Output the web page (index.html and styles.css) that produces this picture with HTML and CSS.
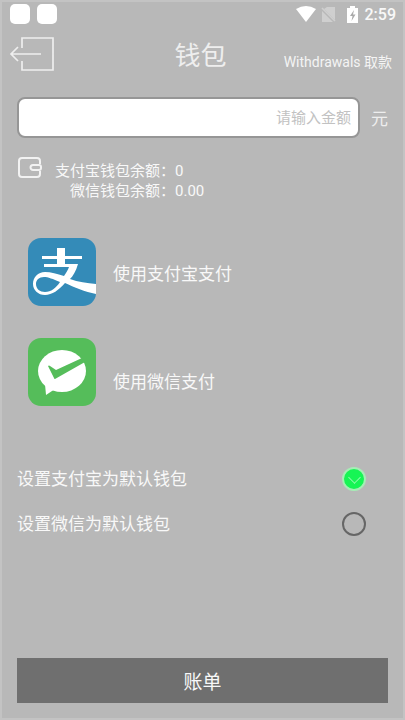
FILE: index.html
```html
<!DOCTYPE html>
<html lang="zh-CN">
<head>
<meta charset="utf-8">
<meta name="viewport" content="width=device-width, initial-scale=1">
<title>钱包</title>
<link rel="stylesheet" href="styles.css">
</head>
<body>
<div class="status">
  <span class="notice"></span>
  <span class="notice"></span>
  <svg class="status-icons" width="62" height="20" viewBox="0 0 62 20" aria-hidden="true">
    <path d="M0 5Q10-1 20 5L10 18Z" fill="#fff"/>
    <path d="M31 3h8v13L28 5zM26 7l11 11H26z" fill="#cfcfcf"/>
    <path d="M26 4l13 13" stroke="#cfcfcf" stroke-width="1.500"/>
    <path d="M54 2h5v2h3v15H51V4h3z" fill="#fff"/>
    <path d="M58 6l-4 6h2.500l-1 5 4-6.500h-2.500z" fill="#aaa"/>
  </svg>
  <span class="clock">2:59</span>
</div>

<header class="header">
  <button class="back" type="button" aria-label="返回">
    <svg width="46" height="36" viewBox="0 0 46 36" fill="none" stroke="#eee" stroke-width="1.700">
      <path d="M13 12V2h31v32H13v-9M32 18H2M9 11l-7 7 7 7"/>
    </svg>
  </button>
  <h1 class="title">钱包</h1>
  <a class="withdraw" href="#withdraw">Withdrawals 取款</a>
</header>

<main class="content">
  <div class="amount">
    <input class="amount-input" id="amount" type="text" inputmode="decimal" placeholder="请输入金额">
    <label class="unit" for="amount">元</label>
  </div>

  <section class="balance">
    <svg width="26" height="22" viewBox="0 0 26 22" fill="none" stroke="#f2f2f2" stroke-width="2" aria-hidden="true">
      <path d="M23 7V4a3 3 0 0 0-3-3H5a3 3 0 0 0-3 3v13a3 3 0 0 0 3 3h15a3 3 0 0 0 3-3v-3"/>
      <path d="M16 8h6a2 2 0 0 1 2 2v1a2 2 0 0 1-2 2h-6a2.500 2.500 0 0 1 0-5z"/>
    </svg>
    <dl class="balances">
      <dt>支付宝钱包余额：</dt><dd>0</dd>
      <dt>微信钱包余额：</dt><dd>0.00</dd>
    </dl>
  </section>

  <section class="methods">
    <button class="method" type="button">
      <svg width="68" height="68" viewBox="0 0 68 68" aria-hidden="true">
        <rect width="68" height="68" rx="13" fill="#348bb8"/>
        <path d="M29 10h8v8h17v3H37v5h13C48 33 45 38 42 41c8 3 17 4 26 5v10c-11-2-22-7-31-11-6 7-13 12-20 12C10 57 5 52 5 46c0-7 5-12 12-12 6 0 12 2 19 4 2-3 4-6 5-9H16v-3h13v-5H14v-3h15zM8 46c0 5 4 8 9 8 6 0 11-4 15-10-7-3-12-5-16-5-5 0-8 3-8 7z" fill="#fff" fill-rule="evenodd"/>
      </svg>
      <span>使用支付宝支付</span>
    </button>
    <button class="method method-wechat" type="button">
      <svg width="68" height="68" viewBox="0 0 68 68" aria-hidden="true">
        <rect width="68" height="68" rx="13" fill="#55bd5a"/>
        <ellipse cx="34" cy="33" rx="24" ry="21" fill="#fff"/>
        <path d="M17 46l1 11 9-6z" fill="#fff"/>
        <path d="M20 28q1-1 2 0l6 4 26-12 3 4-30 17q-1 0-1-1z" fill="#55bd5a"/>
      </svg>
      <span>使用微信支付</span>
    </button>
  </section>

  <section class="defaults">
    <label class="default"><span>设置支付宝为默认钱包</span><input class="radio" type="radio" name="wallet" checked></label>
    <label class="default"><span>设置微信为默认钱包</span><input class="radio" type="radio" name="wallet"></label>
  </section>

  <button class="bill" type="button">账单</button>
</main>
</body>
</html>
```
FILE: styles.css
```css
* {
  box-sizing: border-box;
}

body {
  margin: 0;
  min-height: 100vh;
  display: flex;
  flex-direction: column;
  border: 2px solid #c3c3c3;
  background: #b8b8b8;
  color: #f8f8f8;
  font-family: Roboto, "Noto Sans CJK SC", sans-serif;
}

button {
  padding: 0;
  border: 0;
  background: none;
  color: inherit;
  font: inherit;
}

svg {
  display: block;
  flex: none;
}

.status {
  display: flex;
  align-items: center;
  gap: 7px;
  height: 24px;
  padding: 0 7px 0 8px;
}

.notice {
  width: 20px;
  height: 20px;
  border-radius: 5px;
  background: #fff;
}

.status-icons {
  margin-left: auto;
}

.clock {
  font-size: 16px;
  font-weight: 500;
}

.header {
  display: grid;
  grid-template-columns: 1fr auto 1fr;
  align-items: center;
  height: 56px;
  padding: 0 11px 0 7px;
}

.back {
  justify-self: start;
}

.title {
  margin: 0;
  padding-top: 4px;
  color: #eee;
  font-size: 26px;
  font-weight: 400;
  line-height: 36px;
}

.withdraw {
  justify-self: end;
  padding-top: 16px;
  color: #f4f4f4;
  font-size: 14px;
  line-height: 20px;
  text-decoration: none;
  white-space: nowrap;
}

.content {
  flex: 1;
  display: flex;
  flex-direction: column;
  padding: 15px;
}

.amount {
  display: flex;
  align-items: center;
  gap: 11px;
}

.amount-input {
  flex: 1;
  min-width: 0;
  height: 41px;
  padding: 0 7px;
  border: 2px solid #969696;
  border-radius: 8px;
  background: #fff;
  color: #555;
  font: inherit;
  font-size: 15px;
  text-align: right;
}

.amount-input::placeholder {
  color: #c2c2c2;
}

.unit {
  color: #eee;
  font-size: 17px;
}

.balance {
  display: flex;
  gap: 12px;
  margin-top: 19px;
}

.balances {
  display: grid;
  grid-template-columns: auto auto;
  margin: 4px 0 0;
  font-size: 15px;
  line-height: 20px;
}

.balances dt {
  text-align: right;
}

.balances dd {
  margin: 0;
}

.methods {
  display: flex;
  flex-direction: column;
  gap: 32px;
  margin-top: 37px;
  padding-left: 11px;
}

.method {
  display: flex;
  align-items: center;
  gap: 17px;
  font-size: 17px;
}

.method-wechat span {
  padding-top: 16px;
}

.defaults {
  display: flex;
  flex-direction: column;
  gap: 21px;
  margin-top: 61px;
}

.default {
  display: flex;
  align-items: center;
  justify-content: space-between;
  padding-right: 22px;
  font-size: 17px;
  line-height: 24px;
}

.radio {
  appearance: none;
  width: 24px;
  height: 24px;
  margin: 0;
  border: 2px solid #666;
  border-radius: 50%;
}

.radio:checked {
  display: grid;
  place-items: center;
  border-color: #a5eeb5;
  background: #16f554;
}

.radio:checked::before {
  content: "";
  width: 8px;
  height: 8px;
  margin-bottom: 4px;
  border: solid #8dfbab;
  border-width: 0 1px 1px 0;
  transform: rotate(45deg);
}

.bill {
  height: 45px;
  margin-top: auto;
  background: #6f6f6f;
  font-size: 19px;
}
```
